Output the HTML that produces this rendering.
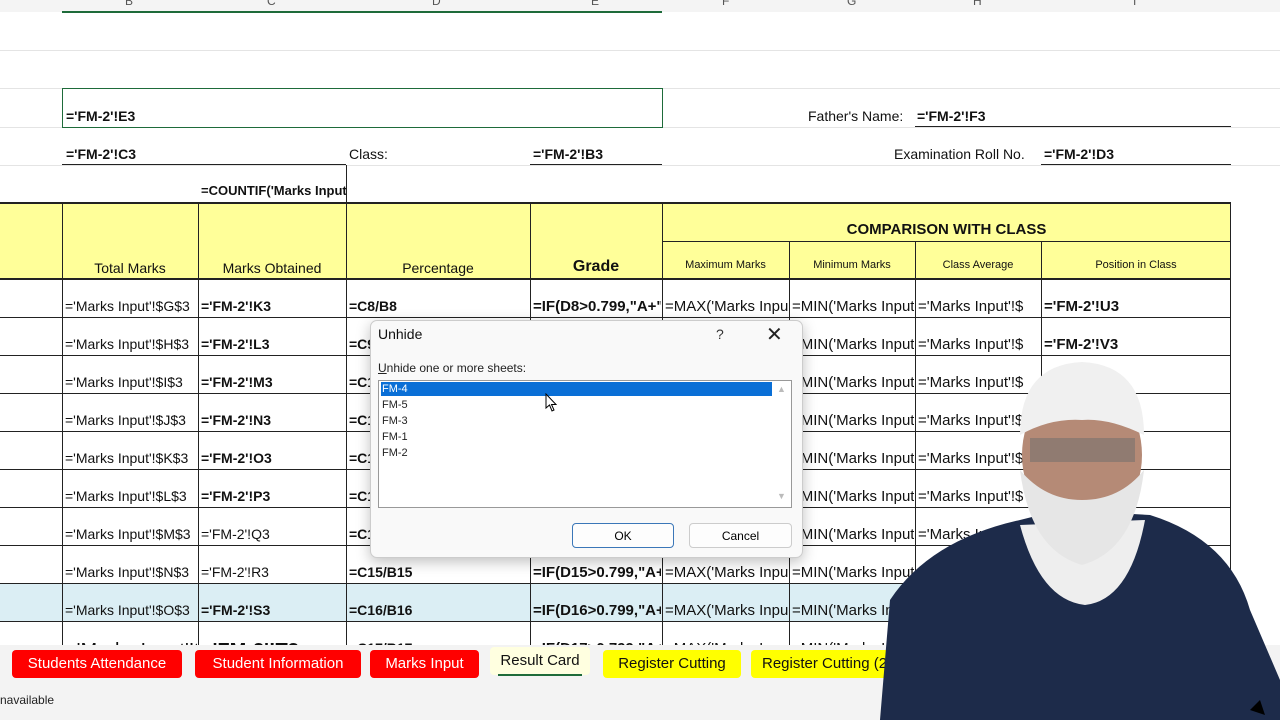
<!DOCTYPE html>
<html><head><style>
body{margin:0;width:1280px;height:720px;overflow:hidden;background:#fff;font-family:"Liberation Sans",sans-serif;position:relative}
.a{position:absolute;white-space:nowrap;overflow:hidden}
.t{font-size:14px;color:#111}
.b{font-weight:bold}
.hl{position:absolute;height:1px;background:#222}
.vl{position:absolute;width:1px;background:#222}
.g{position:absolute;height:1px;background:#e4e4e4}
.tab{position:absolute;top:650px;height:28px;line-height:28px;font-size:15px;text-align:center;border-radius:4px}
</style></head><body>
<div class="a" style="left:0;top:0;width:1280px;height:12px;background:#f4f4f4"></div>
<div class="a" style="left:62px;top:11px;width:600px;height:2px;background:#1e6b3a"></div>
<div class="a t" style="left:125px;top:-6px;font-size:12px;color:#555">B</div>
<div class="a t" style="left:267px;top:-6px;font-size:12px;color:#555">C</div>
<div class="a t" style="left:432px;top:-6px;font-size:12px;color:#555">D</div>
<div class="a t" style="left:591px;top:-6px;font-size:12px;color:#555">E</div>
<div class="a t" style="left:722px;top:-6px;font-size:12px;color:#555">F</div>
<div class="a t" style="left:847px;top:-6px;font-size:12px;color:#555">G</div>
<div class="a t" style="left:973px;top:-6px;font-size:12px;color:#555">H</div>
<div class="a t" style="left:1133px;top:-6px;font-size:12px;color:#555">I</div>
<div class="g" style="left:0;top:50px;width:1280px"></div>
<div class="g" style="left:0;top:88px;width:1280px"></div>
<div class="g" style="left:0;top:127px;width:1280px"></div>
<div class="g" style="left:0;top:165px;width:1280px"></div>
<div class="a" style="left:62px;top:88px;width:599px;height:38px;border:1px solid #1e6b3a"></div>
<div class="a t b" style="left:66px;top:108px">='FM-2'!E3</div>
<div class="a t" style="left:808px;top:108px">Father's Name:</div>
<div class="a t b" style="left:917px;top:108px">='FM-2'!F3</div>
<div class="hl" style="left:915px;top:126px;width:316px"></div>
<div class="a t b" style="left:66px;top:146px">='FM-2'!C3</div>
<div class="hl" style="left:62px;top:164px;width:284px"></div>
<div class="a t" style="left:349px;top:146px">Class:</div>
<div class="a t b" style="left:533px;top:146px">='FM-2'!B3</div>
<div class="hl" style="left:530px;top:164px;width:132px"></div>
<div class="a t" style="left:894px;top:146px">Examination Roll No.</div>
<div class="a t b" style="left:1044px;top:146px">='FM-2'!D3</div>
<div class="hl" style="left:1041px;top:164px;width:190px"></div>
<div class="a t b" style="left:201px;top:183px;width:145px;font-size:13px">=COUNTIF('Marks Input</div>
<div class="a" style="left:0;top:203px;width:1231px;height:76px;background:#ffff99"></div>
<div class="a t" style="left:62px;top:260px;width:136px;text-align:center">Total Marks</div>
<div class="a t" style="left:198px;top:260px;width:148px;text-align:center">Marks Obtained</div>
<div class="a t" style="left:346px;top:260px;width:184px;text-align:center">Percentage</div>
<div class="a t b" style="left:530px;top:258px;width:132px;text-align:center;font-size:16px">Grade</div>
<div class="a t b" style="left:662px;top:221px;width:569px;text-align:center;font-size:15px">COMPARISON WITH CLASS</div>
<div class="a t" style="left:662px;top:259px;width:127px;text-align:center;font-size:11px">Maximum Marks</div>
<div class="a t" style="left:789px;top:259px;width:126px;text-align:center;font-size:11px">Minimum Marks</div>
<div class="a t" style="left:915px;top:259px;width:126px;text-align:center;font-size:11px">Class Average</div>
<div class="a t" style="left:1041px;top:259px;width:190px;text-align:center;font-size:11px">Position in Class</div>
<div class="a" style="left:0;top:584px;width:1231px;height:37px;background:#dbeef4"></div>
<div class="hl" style="left:0;top:202px;width:1231px;height:2px"></div>
<div class="hl" style="left:662px;top:241px;width:569px"></div>
<div class="hl" style="left:0;top:278px;width:1231px;height:2px"></div>
<div class="hl" style="left:0;top:317px;width:1231px"></div>
<div class="hl" style="left:0;top:355px;width:1231px"></div>
<div class="hl" style="left:0;top:393px;width:1231px"></div>
<div class="hl" style="left:0;top:431px;width:1231px"></div>
<div class="hl" style="left:0;top:469px;width:1231px"></div>
<div class="hl" style="left:0;top:507px;width:1231px"></div>
<div class="hl" style="left:0;top:545px;width:1231px"></div>
<div class="hl" style="left:0;top:583px;width:1231px"></div>
<div class="hl" style="left:0;top:621px;width:1231px"></div>
<div class="vl" style="left:62px;top:203px;height:442px"></div>
<div class="vl" style="left:198px;top:203px;height:442px"></div>
<div class="vl" style="left:346px;top:165px;height:480px"></div>
<div class="vl" style="left:530px;top:203px;height:442px"></div>
<div class="vl" style="left:662px;top:203px;height:442px"></div>
<div class="vl" style="left:789px;top:241px;height:404px"></div>
<div class="vl" style="left:915px;top:241px;height:404px"></div>
<div class="vl" style="left:1041px;top:241px;height:404px"></div>
<div class="vl" style="left:1230px;top:203px;height:442px"></div>
<div id="rows"></div>
<script>
var B="GHIJKLMNO",C="KLMNOPQRS",h="";
for(var i=0;i<10;i++){var y=298+i*38,n=8+i;
var cb=(i==6||i==7)?"":" b";
var fs=i==9?"font-size:20px;":"";
h+='<div class="a t" style="left:65px;top:'+y+'px;width:132px;'+fs+'">=\'Marks Input\'!$'+(B[i]||"P")+'$3</div>';
h+='<div class="a t'+cb+'" style="left:201px;top:'+y+'px;width:144px;'+fs+'">=\'FM-2\'!'+(C[i]||"T")+'3</div>';
h+='<div class="a t b" style="left:349px;top:'+y+'px;width:180px">=C'+n+'/B'+n+'</div>';
h+='<div class="a t b" style="left:533px;top:'+y+'px;width:128px;font-size:15px">=IF(D'+n+'>0.799,"A+"</div>';
h+='<div class="a t" style="left:665px;top:'+y+'px;width:123px;font-size:15px">=MAX(\'Marks Input</div>';
h+='<div class="a t" style="left:792px;top:'+y+'px;width:122px;font-size:15px">=MIN(\'Marks Input</div>';
h+='<div class="a t" style="left:918px;top:'+y+'px;width:122px;font-size:15px">=\'Marks Input\'!$</div>';
h+='<div class="a t b" style="left:1044px;top:'+y+'px;font-size:15px">=\'FM-2\'!'+"UVWXYZ"[i%6]+'3</div>';}
document.getElementById("rows").innerHTML=h;
</script>
<div class="a" style="left:0;top:645px;width:1280px;height:75px;background:#f3f3f3"></div>
<div class="tab" style="left:12px;width:170px;background:#f00;color:#fff">Students Attendance</div>
<div class="tab" style="left:195px;width:166px;background:#f00;color:#fff">Student Information</div>
<div class="tab" style="left:370px;width:109px;background:#f00;color:#fff">Marks Input</div>
<div class="tab" style="left:490px;width:100px;background:#ffffe0;color:#111;top:647px">Result Card</div>
<div class="a" style="left:498px;top:674px;width:84px;height:2px;background:#1e6b3a"></div>
<div class="tab" style="left:603px;width:138px;background:#ff0;color:#111">Register Cutting</div>
<div class="tab" style="left:751px;width:150px;background:#ff0;color:#111;text-align:left;padding-left:11px;box-sizing:border-box;overflow:hidden">Register Cutting (2)</div>
<div class="a" style="left:0;top:693px;font-size:12px;color:#222">navailable</div>
<svg class="a" style="left:870px;top:350px" width="410" height="370">
<path d="M10 370 L20 250 Q60 190 150 170 L190 160 L280 165 Q360 190 380 260 L410 330 L410 370Z" fill="#1d2b4a"/>
<path d="M150 175 Q170 250 215 255 Q260 250 275 170Z" fill="#eeeeee"/>
<ellipse cx="212" cy="105" rx="60" ry="75" fill="#b58a76"/>
<path d="M150 85 Q150 15 212 12 Q274 15 274 85 Q240 68 212 70 Q180 68 150 85Z" fill="#f0f0f0"/>
<path d="M150 120 Q160 200 212 215 Q265 200 274 120 Q250 150 212 150 Q175 150 150 120Z" fill="#e6e6e6"/>
<rect x="160" y="88" width="105" height="24" fill="#6b6b6b" opacity=".5"/>
<path d="M380 360 L390 350 L395 365Z" fill="#000"/>
</svg>
<div class="a" style="left:370px;top:320px;width:431px;height:236px;background:#f9f9f9;border:1px solid #ccc;border-radius:7px;box-shadow:0 4px 14px rgba(0,0,0,.25)"></div>
<div class="a" style="left:378px;top:326px;font-size:14px;color:#111">Unhide</div>
<div class="a" style="left:716px;top:326px;font-size:14px;color:#333">?</div>
<div class="a" style="left:766px;top:322px;font-size:20px;color:#222">✕</div>
<div class="a" style="left:378px;top:361px;font-size:12px;color:#222"><u>U</u>nhide one or more sheets:</div>
<div class="a" style="left:378px;top:380px;width:414px;height:128px;background:#fff;border:1px solid #999;box-sizing:border-box"></div>
<div class="a" style="left:381px;top:382px;width:391px;height:14px;background:#0a6fd6"></div>
<div class="a" style="left:382px;top:382px;font-size:11px;line-height:14px;color:#fff">FM-4</div>
<div class="a" style="left:382px;top:398px;font-size:11px;line-height:14px;color:#222">FM-5</div>
<div class="a" style="left:382px;top:414px;font-size:11px;line-height:14px;color:#222">FM-3</div>
<div class="a" style="left:382px;top:430px;font-size:11px;line-height:14px;color:#222">FM-1</div>
<div class="a" style="left:382px;top:446px;font-size:11px;line-height:14px;color:#222">FM-2</div>
<div class="a" style="left:777px;top:384px;font-size:9px;color:#bbb">▲</div>
<div class="a" style="left:777px;top:491px;font-size:9px;color:#bbb">▼</div>
<svg class="a" style="left:545px;top:393px" width="14" height="20"><path d="M1 1 L1 15 L4.5 12 L7 18 L9 17 L6.5 11.5 L11 11.5Z" fill="#fff" stroke="#000"/></svg>
<div class="a" style="left:572px;top:523px;width:102px;height:25px;border:1px solid #3b77b8;border-radius:4px;background:#fdfdfd;text-align:center;line-height:25px;font-size:12px;box-sizing:border-box">OK</div>
<div class="a" style="left:689px;top:523px;width:103px;height:25px;border:1px solid #ccc;border-radius:4px;background:#fdfdfd;text-align:center;line-height:25px;font-size:12px;box-sizing:border-box">Cancel</div>
</body></html>
